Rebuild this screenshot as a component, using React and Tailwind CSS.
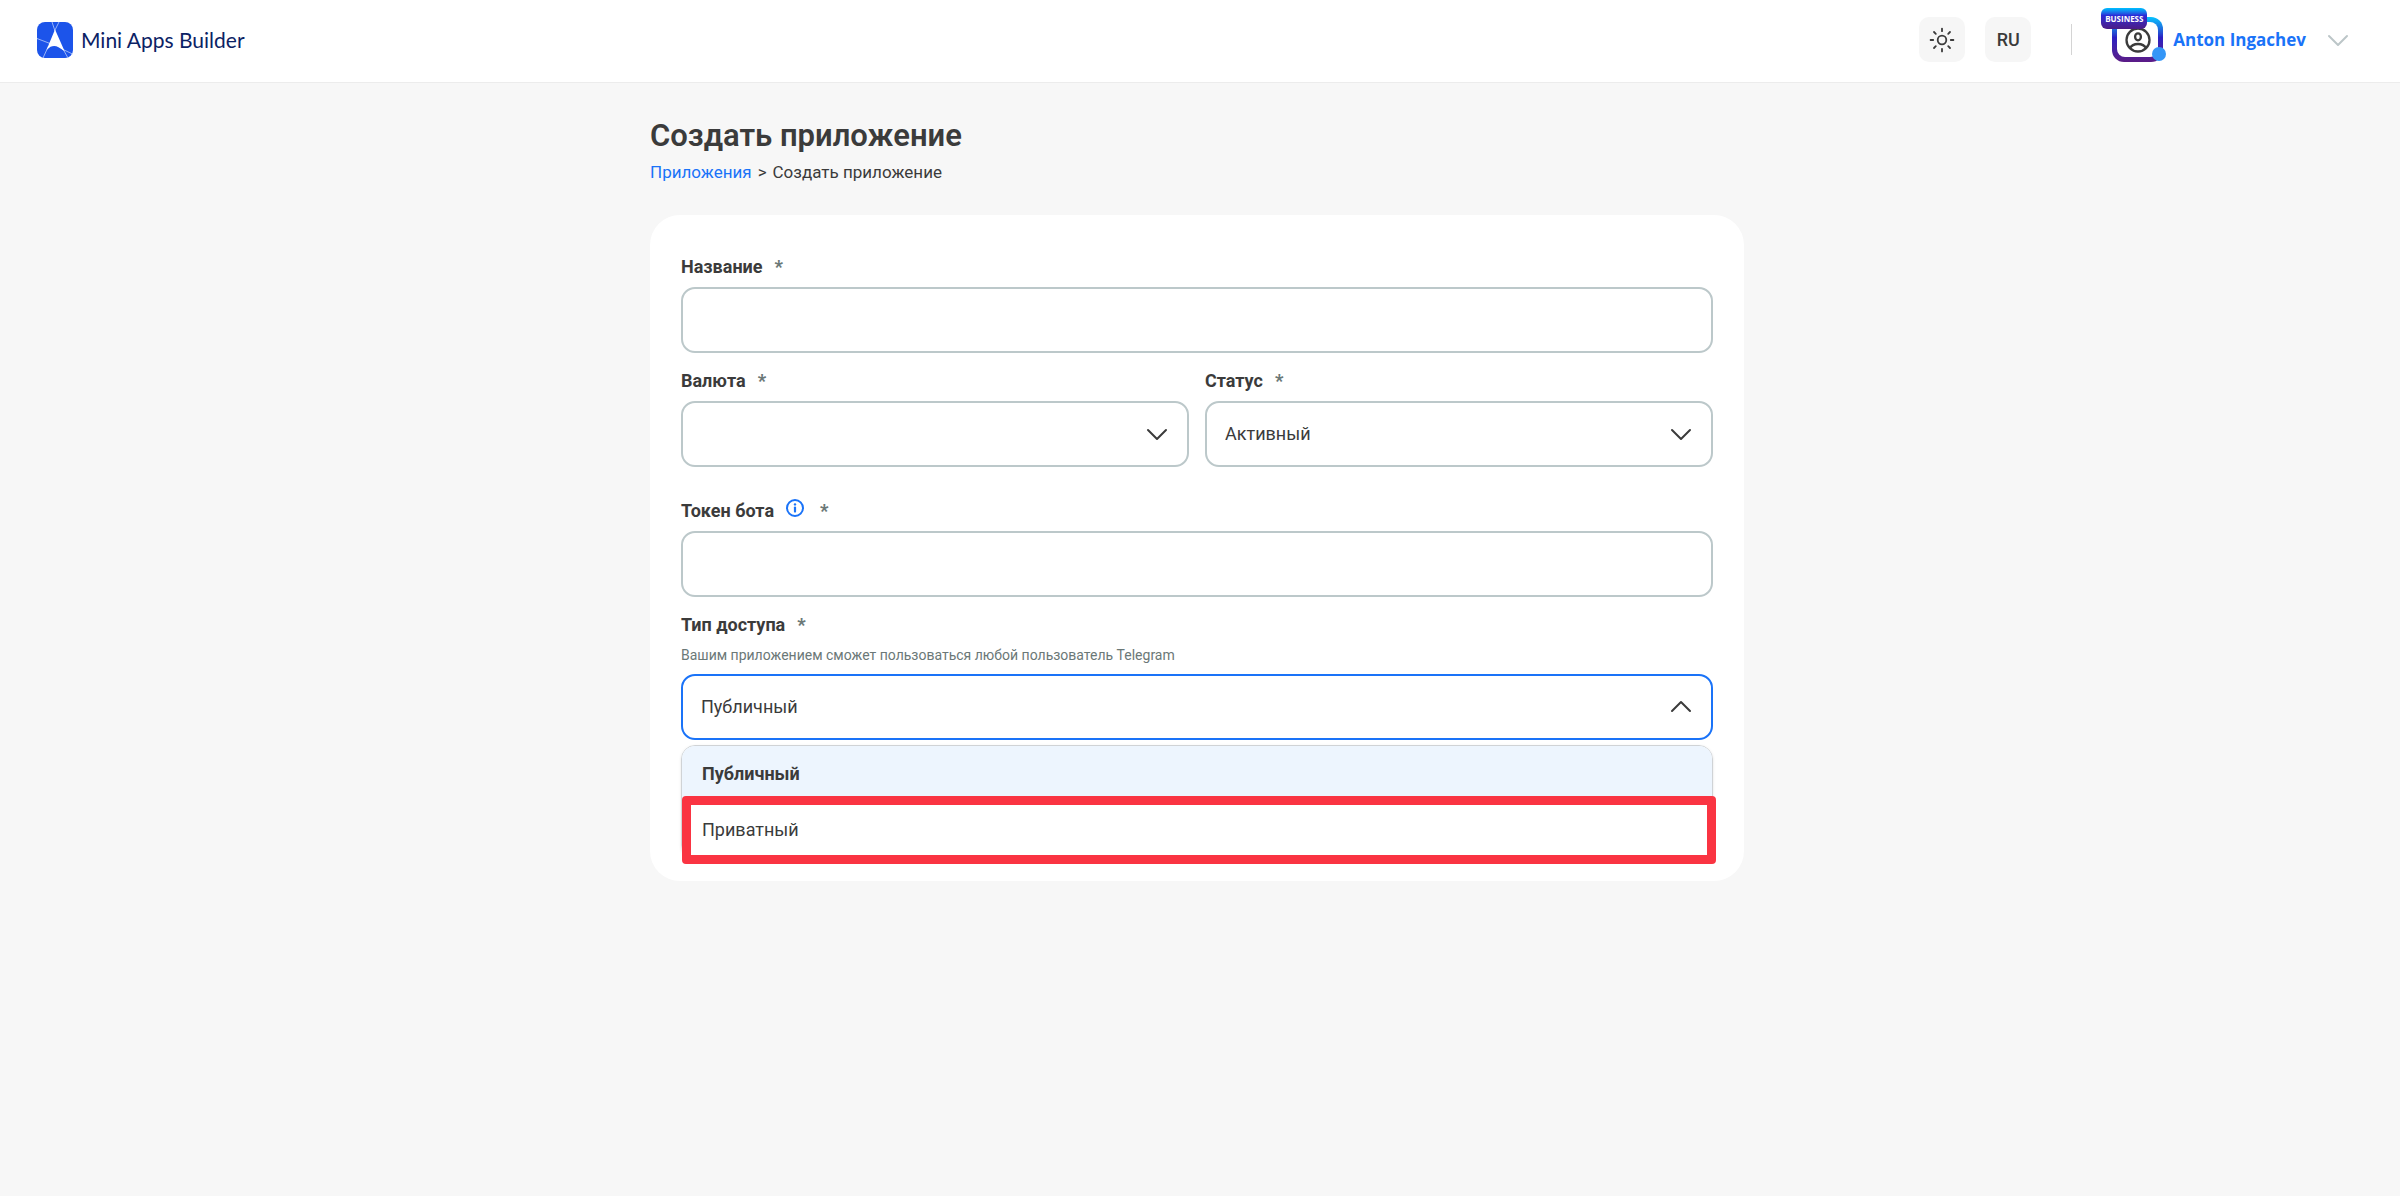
/**
 * Create App page
 * Header with account menu and the form for a new mini app
 */

import { useId, useState } from 'react';

function LogoMark() {
  return (
    <svg className="size-9" viewBox="0 0 36 36" aria-hidden="true">
      <rect width="36" height="36" rx="8" fill="#1c54ea" />
      <g stroke="#b9cbfa" strokeWidth="0.8">
        <path d="M22 0 L17.5 9" />
        <path d="M15 0 L18 9" />
        <path d="M0 16.5 L13 21.5" />
        <path d="M11.5 24 L6 36" />
        <path d="M25 27 L35.5 32" />
        <path d="M26 27 L31 36" />
      </g>
      <path d="M18 7.5 L27.5 29 L21.5 25.2 Q17.5 22.8 13.5 24.8 L9.5 28 Z" fill="#fff" />
    </svg>
  );
}

function SunIcon() {
  return (
    <svg className="size-7" viewBox="0 0 28 28" fill="none" stroke="#3b3b3b" strokeWidth="1.8" strokeLinecap="round" aria-hidden="true">
      <circle cx="14" cy="14" r="4.3" />
      <path d="M14 2.6v2.6M14 22.8v2.6M2.6 14h2.6M22.8 14h2.6M6 6l1.8 1.8M20.2 20.2l1.8 1.8M6 22l1.8-1.8M20.2 7.8l1.8-1.8" />
    </svg>
  );
}

function Chevron({ className }) {
  return (
    <svg className={className} viewBox="0 0 24 24" fill="none" stroke="currentColor" strokeWidth="2" strokeLinecap="round" strokeLinejoin="round" aria-hidden="true">
      <path d="M3 8l9 9 9-9" />
    </svg>
  );
}

function InfoIcon() {
  return (
    <svg className="size-[18px]" viewBox="0 0 18 18" fill="none" aria-hidden="true">
      <circle cx="9" cy="9" r="8" stroke="#1a73f8" strokeWidth="2" />
      <circle cx="9" cy="5.4" r="1.2" fill="#1a73f8" />
      <path d="M9 8.6v4" stroke="#1a73f8" strokeWidth="2.200" strokeLinecap="round" />
    </svg>
  );
}

function Avatar() {
  return (
    <span className="relative block h-[45px] w-[51px] rounded-xl bg-linear-to-b from-[#05c3ff] via-[#2a1fc4] via-45% to-[#5b1a86] p-[5px]">
      <span className="flex h-full items-center justify-center rounded-lg bg-white">
        <svg className="size-[26px]" viewBox="0 0 26 26" fill="none" stroke="#3b3b3b" strokeWidth="2.300" aria-hidden="true">
          <circle cx="13" cy="13" r="11.5" />
          <ellipse cx="13" cy="9.8" rx="2.9" ry="3.5" />
          <path d="M5 21.2c1.4-2.9 4.5-4.2 8-4.2s6.6 1.3 8 4.2" />
        </svg>
      </span>
      <span className="absolute -top-[9px] -left-[11px] flex h-[21px] w-[46px] items-center justify-center rounded-md bg-linear-to-b from-[#00c0ff] via-[#2a2bd8] via-35% to-[#4b1a86] font-['Open_Sans',sans-serif] text-[8px] font-bold text-white">
        BUSINESS
      </span>
      <span className="absolute -right-[3px] bottom-px size-3.5 rounded-full bg-[#3496f7]" />
    </span>
  );
}

function Header() {
  return (
    <header className="flex items-center justify-between border-b border-[#ececec] bg-white pt-[17px] pr-[50px] pb-5 pl-[37px]">
      <a href="#home" className="flex items-center gap-2 font-[Lato,sans-serif] text-[21px] leading-7 text-[#0b2265]">
        <LogoMark />
        Mini Apps Builder
      </a>

      <div className="flex items-center">
        <button type="button" aria-label="Тема" className="flex h-[45px] w-[46px] items-center justify-center rounded-[10px] bg-[#f6f6f6]">
          <SunIcon />
        </button>
        <button type="button" className="ml-5 h-[45px] w-[46px] rounded-[10px] bg-[#f6f6f6] text-lg font-medium">
          RU
        </button>
        <span className="mx-10 h-[31px] w-px bg-[#d4d4d4]" />
        <button type="button" className="flex items-center">
          <Avatar />
          <span className="ml-2.5 font-['Open_Sans',sans-serif] text-[17px] font-bold text-[#1a73f8]">Anton Ingachev</span>
          <Chevron className="ml-5 size-6 text-[#bcc6c8]" />
        </button>
      </div>
    </header>
  );
}

function FieldLabel({ htmlFor, id, info, children }) {
  return (
    <div className="flex h-6 items-center gap-3">
      <label htmlFor={htmlFor} id={id} className="text-lg leading-6 font-bold">{children}</label>
      {info && (
        <button type="button" aria-label="Подсказка" className="mr-1 pb-1.5">
          <InfoIcon />
        </button>
      )}
      <span className="text-lg leading-6 font-black text-[#6b7877]">*</span>
    </div>
  );
}

function TextField({ label, info }) {
  const id = useId();
  return (
    <div className="flex flex-col gap-2">
      <FieldLabel htmlFor={id} info={info}>{label}</FieldLabel>
      <input id={id} type="text" className="h-[66px] w-full rounded-[14px] border-2 border-[#bcc8ca] bg-white px-5 text-lg outline-none" />
    </div>
  );
}

function SelectField({ label, options }) {
  const id = useId();
  return (
    <div className="flex flex-col gap-2">
      <FieldLabel htmlFor={id}>{label}</FieldLabel>
      <div className="relative">
        <select id={id} className="h-[66px] w-full appearance-none rounded-[14px] border-2 border-[#bcc8ca] bg-white px-[18px] text-lg outline-none">
          {options.map((option) => (
            <option key={option}>{option}</option>
          ))}
        </select>
        <Chevron className="pointer-events-none absolute inset-y-0 right-5 my-auto size-6" />
      </div>
    </div>
  );
}

const ACCESS_TYPES = ['Публичный', 'Приватный'];

function AccessField() {
  const id = useId();
  const [open, setOpen] = useState(true);
  const [value, setValue] = useState('Публичный');

  return (
    <div className="flex flex-col gap-2">
      <FieldLabel id={id}>Тип доступа</FieldLabel>
      <p className="text-sm leading-[21px] text-[#6b7877]">
        Вашим приложением сможет пользоваться любой пользователь Telegram
      </p>
      <div>
        <button
          type="button"
          aria-haspopup="listbox"
          aria-expanded={open}
          aria-labelledby={id}
          onClick={() => setOpen(!open)}
          className="flex h-[66px] w-full items-center justify-between rounded-[14px] border-2 border-[#1a73f8] bg-white px-[18px] text-lg"
        >
          {value}
          <Chevron className="size-6 rotate-180" />
        </button>

        {open && (
          <ul role="listbox" aria-labelledby={id} className="mt-[5px] rounded-[14px] border border-[#d0d3d6] shadow-sm">
            {ACCESS_TYPES.map((type) => (
              <li
                key={type}
                role="option"
                aria-selected={type === value}
                onClick={() => setValue(type)}
                className="relative flex h-14 cursor-pointer items-center px-5 text-lg first:rounded-t-[13px] aria-selected:bg-[#edf5fe] aria-selected:font-bold"
              >
                {type}
                {type === 'Приватный' && (
                  <span className="pointer-events-none absolute -inset-y-1.5 -right-1 left-0 rounded border-[9px] border-[#fa3442]" />
                )}
              </li>
            ))}
          </ul>
        )}
      </div>
    </div>
  );
}

export default function App() {
  return (
    <div className="min-h-screen bg-[#f7f7f7] font-[Roboto,sans-serif] text-[#3b3b3b]">
      <Header />

      <main className="mx-auto max-w-[1100px] pt-[33px] pr-1.5">
        <h1 className="text-[31px] leading-10 font-semibold">Создать приложение</h1>
        <nav className="mt-1 flex gap-1.5 text-[17px] leading-6">
          <a href="#apps" className="text-[#1a73f8]">Приложения</a>
          <span>&gt;</span>
          <span>Создать приложение</span>
        </nav>

        <form className="mt-[31px] rounded-[30px] bg-white px-[31px] pt-10 pb-[22px]">
          <TextField label="Название" />
          <div className="mt-4 grid grid-cols-2 gap-4">
            <SelectField label="Валюта" options={['', 'RUB', 'USD', 'EUR']} />
            <SelectField label="Статус" options={['Активный', 'Неактивный']} />
          </div>
          <div className="mt-8 flex flex-col gap-4">
            <TextField label="Токен бота" info />
            <AccessField />
          </div>
        </form>
      </main>
    </div>
  );
}
